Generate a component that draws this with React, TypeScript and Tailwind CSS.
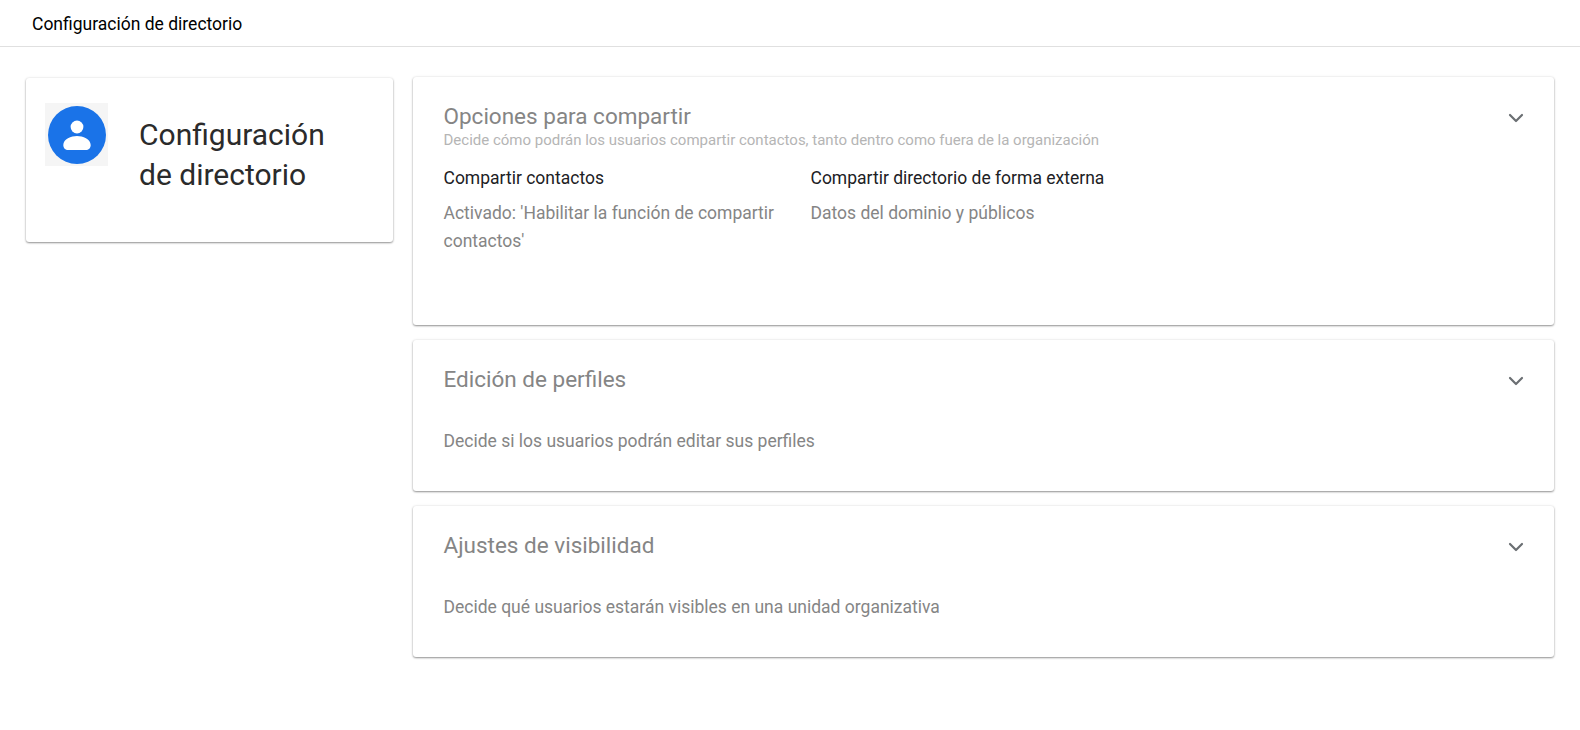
import React from "react";
import { ChevronDown } from "lucide-react";

const cardClass =
  "relative rounded-[3px] bg-white shadow-[0_1px_2px_rgba(0,0,0,0.4),0_0_3px_rgba(0,0,0,0.1)]";

const Chevron = () => (
  <ChevronDown
    size={24}
    strokeWidth={2.2}
    className="absolute right-[26px] top-[29px] text-[#6b6f73]"
  />
);

const SimpleCard = ({ title, text }: { title: string; text: string }) => (
  <section className={`${cardClass} h-[151px] pl-[30.5px] pt-[25px]`}>
    <h2 className="text-[22.5px] leading-[29px] text-[#858585]">{title}</h2>
    <p className="mt-[33px] text-[17.5px] leading-[28px] text-[#858585]">{text}</p>
    <Chevron />
  </section>
);

export default function App() {
  return (
    <div className="min-h-[730px] bg-white font-['Roboto',sans-serif]">
      <header className="flex h-[47px] items-center border-b border-[#e0e0e0] pl-[32px] pt-[3px] text-[17.5px] text-black">
        Configuración de directorio
      </header>

      <div className="flex items-start gap-[20px] pl-[26px] pr-[26px] pt-[30px]">
        {/* Left card */}
        <aside className={`${cardClass} mt-[1px] flex h-[164px] w-[367px] shrink-0 pl-[19px] pt-[25px]`}>
          <div className="flex h-[63px] w-[63px] items-center justify-center bg-[#f5f5f5]">
            <svg viewBox="0 0 58 58" className="h-[58px] w-[58px]">
              <circle cx="29" cy="29" r="29" fill="#1a73e8" />
              <circle cx="29" cy="21" r="6.4" fill="#fff" />
              <path
                d="M15.3 39c0-6 8-9 13.7-9s13.700 3 13.700 9c0 3-2 5-5 5H20.300c-3 0-5-2-5-5z"
                fill="#fff"
              />
            </svg>
          </div>
          <h1 className="ml-[31px] mt-[12px] text-[30px] leading-[40px] text-[#2b2b2b]">
            Configuración
            <br />
            de directorio
          </h1>
        </aside>

        {/* Right cards */}
        <main className="flex flex-1 flex-col gap-[15px]">
          <section className={`${cardClass} h-[248px] pl-[30.5px] pt-[25px]`}>
            <h2 className="text-[22.5px] leading-[29px] text-[#858585]">Opciones para compartir</h2>
            <p className="mt-[1px] text-[15px] leading-[16px] text-[#b5b5b5]">
              Decide cómo podrán los usuarios compartir contactos, tanto dentro como fuera de la organización
            </p>
            <div className="mt-[18px] flex">
              <div className="w-[367px] pr-[20px]">
                <h3 className="text-[17.5px] leading-[24px] text-[#202124]">Compartir contactos</h3>
                <p className="mt-[9px] text-[17.5px] leading-[28px] text-[#858585]">
                  Activado: 'Habilitar la función de compartir contactos'
                </p>
              </div>
              <div className="w-[367px]">
                <h3 className="text-[17.5px] leading-[24px] text-[#202124]">Compartir directorio de forma externa</h3>
                <p className="mt-[9px] text-[17.5px] leading-[28px] text-[#858585]">Datos del dominio y públicos</p>
              </div>
            </div>
            <Chevron />
          </section>

          <SimpleCard title="Edición de perfiles" text="Decide si los usuarios podrán editar sus perfiles" />
          <SimpleCard title="Ajustes de visibilidad" text="Decide qué usuarios estarán visibles en una unidad organizativa" />
        </main>
      </div>
    </div>
  );
}
